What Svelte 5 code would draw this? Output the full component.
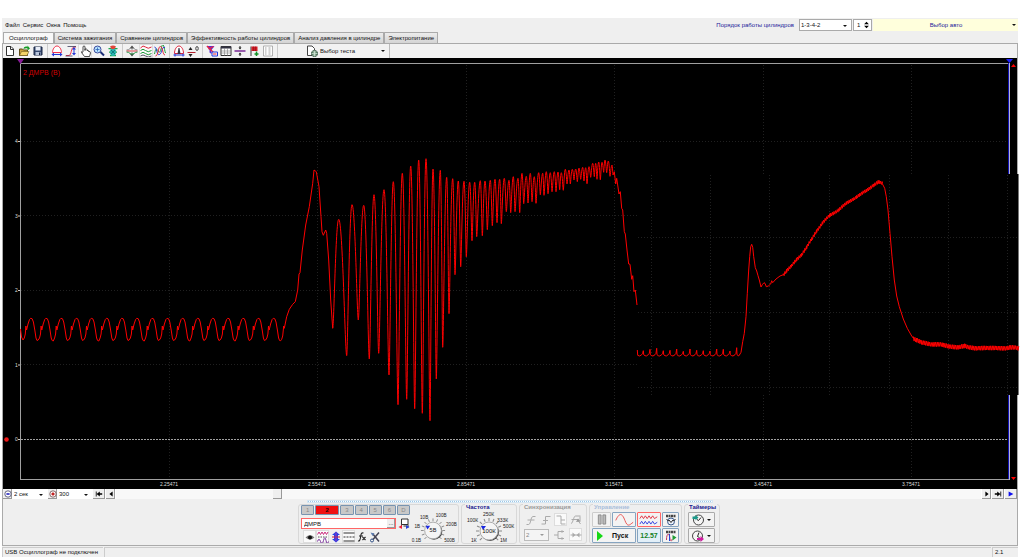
<script>
	const menus = ['Файл', 'Сервис', 'Окна', 'Помощь'];
	const tabs = [
		'Осциллограф',
		'Система зажигания',
		'Сравнение цилиндров',
		'Эффективность работы цилиндров',
		'Анализ давления в цилиндре',
		'Электропитание'
	];
	const toolGroups = [
		['new', 'open', 'save'],
		['dome', 'edge', 'hand', 'zoom', 'bug'],
		['expand', 'waves', 'overlap'],
		['measure', 'level'],
		['filter', 'table', 'divide', 'flag', 'report']
	];
	const pressed = ['hand', 'waves'];
	const channels = ['1', '2', '3', '4', '5', '6', 'D'];
	const channelTools = ['eye', 'noise', 'shift', 'lines', 'fx', 'cut'];
	const syncModes = ['rise', 'step', 'fall', 'auto'];

	let activeTab = $state(0);
	let activeChannel = $state('2');

	// 24x24 icons
	const icons = {
		new: '<path d="M5 3h9l5 5v13H5z" fill="#fff" stroke="#333" stroke-width="2"/><path d="M13 3v6h6" fill="none" stroke="#333" stroke-width="2"/>',
		open: '<path d="M3 21V8h6l2 2h8v11z" fill="#c9a13b" stroke="#5d4a16" stroke-width="2"/><path d="M3 21l4-8h15l-4 8z" fill="#f2d267" stroke="#5d4a16"/><path d="M11 8c1-5 5-6 8-4V1l5 6-5 4V7c-3-1-5 0-8 1z" fill="#159b25"/>',
		save: '<path d="M4 4h16v16H4z" fill="#35486f" stroke="#1b2744" stroke-width="2"/><path d="M7 4h10v7H7z" fill="#e9eef8"/><path d="M7 14h10v6H7z" fill="#b8c4da"/><path d="M14 15h2v5h-2z" fill="#1b2744"/>',
		dome: '<path d="M3 15c0-6 4-13 9-13s9 7 9 13z" fill="#fff" stroke="#f0304a" stroke-width="2"/><path d="M1 19l5-4v3h12v-3l5 4-5 4v-3H6v3z" fill="#2438d8"/>',
		edge: '<path d="M2 21h6c5 0 4-17 10-17h4" fill="none" stroke="#f0304a" stroke-width="2"/><path d="M5 3h17M1 22h14" stroke="#335" stroke-width="1.5"/><path d="M18 4l4 5h-3v7h3l-4 5-4-5h3V9h-3z" fill="#2438d8"/>',
		hand: '<path d="M8 14V4q0-2 2-2t2 2v7V8q4-1 4 1v2q4-1 3 2 4-1 4 3l-2 7H11l-6-8q-2-3 3 0" fill="#fff" stroke="#222" stroke-width="1.6"/>',
		zoom: '<circle cx="9" cy="9" r="7" fill="#b9e4ff" stroke="#3a4a9b" stroke-width="2"/><path d="M15 14l7 7" stroke="#1c2f78" stroke-width="4"/><path d="M5 9h8M9 5v8" stroke="#2f62b8" stroke-width="1.6"/>',
		bug: '<path d="M3 7h18M4 14h16M6 21h12" stroke="#19a54b" stroke-width="2.5"/><ellipse cx="12" cy="14" rx="6" ry="8" fill="#28b6b0"/><path d="M6 3q6-4 12 0l-3 5H9z" fill="#e0453a"/><path d="M8 10l8 8M16 10l-8 8" stroke="#0a6a70" stroke-width="1.5"/>',
		expand: '<path d="M12 1l4 5h-8zM12 23l4-5h-8z" fill="#444"/><path d="M12 4v5M12 15v5" stroke="#444" stroke-width="2"/><path d="M1 10q5 0 7-3 4-3 8 0 3 3 7 3" fill="none" stroke="#666" stroke-width="1.5"/><path d="M1 12h22" stroke="#d93a46" stroke-width="2"/><path d="M1 14q5 0 7 3 4 3 8 0 3-3 7-3" fill="none" stroke="#249342" stroke-width="2"/>',
		waves: '<path d="M1 6q5-7 10-2t12 0" fill="none" stroke="#e0243a" stroke-width="2"/><path d="M1 11q5-5 10 0t12 0" fill="none" stroke="#1d9b3a" stroke-width="2"/><path d="M1 17q5-5 10 0t12 0" fill="none" stroke="#1d9b3a" stroke-width="2"/><path d="M1 22q5-4 10 0t12 0" fill="none" stroke="#556" stroke-width="2"/>',
		overlap: '<path d="M1 18C6-8 9 28 14 8s6 0 9 8" fill="none" stroke="#1d9b3a" stroke-width="2"/><path d="M1 4c5 0 4 18 10 15S15 2 22 5" fill="none" stroke="#2438d8" stroke-width="2"/><path d="M3 22C9 22 8 2 13 3s4 17 9 17" fill="none" stroke="#e0243a" stroke-width="2"/>',
		measure: '<path d="M3 17c0-8 4-15 9-15s9 7 9 15z" fill="#fff" stroke="#e0243a" stroke-width="2"/><path d="M9 18l2-12h2l2 12z" fill="#334"/><path d="M1 20h22M4 17v6M20 17v6" stroke="#2438d8" stroke-width="2"/>',
		level: '<path d="M1 15h16" stroke="#b3202c" stroke-width="2"/><path d="M7 4l4 6H3zM7 24l4-6H3z" fill="#222"/><ellipse cx="20" cy="7" rx="2.500" ry="4" fill="none" stroke="#222" stroke-width="1.6"/>',
		filter: '<path d="M1 2h16l-6 8v8l-4-3v-5z" fill="#5a2bd1"/><path d="M2 2l13 13M15 3L5 8" stroke="#f0243a" stroke-width="2.5"/><path d="M12 14h11v8H12z" fill="#fff" stroke="#2438d8" stroke-width="2"/><path d="M14 18h7" stroke="#e0243a" stroke-width="2"/>',
		table: '<path d="M2 3h20v18H2z" fill="#fff" stroke="#333" stroke-width="2"/><path d="M2 5h20" stroke="#334" stroke-width="4"/><path d="M9 6v15M15 6v15M2 12h20M2 16h20" stroke="#888" stroke-width="1.3"/>',
		divide: '<path d="M1 12h22" stroke="#7a2a96" stroke-width="3"/><path d="M12 2v5M12 17v5" stroke="#222" stroke-width="2"/><path d="M9 5h6l-3 4zM9 19h6l-3-4z" fill="#222"/>',
		flag: '<path d="M6 3v19" stroke="#333" stroke-width="2"/><path d="M7 3h12v9H7z" fill="#d21923"/><path d="M11 3v9M15 3v9" stroke="#801018"/><path d="M17 13v9M13 18h8" stroke="#139427" stroke-width="3"/>',
		report: '<path d="M3 2h18v20H3z" fill="#fdfdfd" stroke="#999" stroke-width="1.5"/><path d="M6 6h3M13 6h4M6 10h3M13 10h4M6 14h3M13 14h4M6 18h3M13 18h4" stroke="#888" stroke-width="1.5"/>',
		test: '<path d="M3 2h9l5 5v14H3z" fill="#fff" stroke="#444" stroke-width="2"/><circle cx="17" cy="17" r="6" fill="#6f9a7c" stroke="#2b4c38" stroke-width="2"/><path d="M11 17h12M17 11v12M13 13q4 3 8 0M13 21q4-3 8 0" fill="none" stroke="#dfeee4" stroke-width="1.2"/>',
		eye: '<path d="M3 13q9-9 18 0-9 8-18 0z" fill="#777"/><circle cx="12" cy="13" r="4" fill="#111"/>',
		noise: '<path d="M1 7l3-5 3 5 3-5 3 5 3-5 3 5 3-5" fill="none" stroke="#cc2b7e" stroke-width="2"/><path d="M1 21q3-9 6 0t6-2 5 0 5 2" fill="none" stroke="#7a309c" stroke-width="2"/><path d="M2 12h20" stroke="#222" stroke-width="1.5" stroke-dasharray="3 2"/>',
		shift: '<path d="M12 1l8 7h-4v8h4l-8 7-8-7h4V8H4z" fill="#2742e8"/><path d="M4 12h16" stroke="#d0253b" stroke-width="2"/><path d="M12 3v18" stroke="#a030b0" stroke-width="2"/>',
		lines: '<path d="M1 4h22M1 20h22" stroke="#333" stroke-width="2"/><path d="M1 12h22" stroke="#333" stroke-width="2" stroke-dasharray="4 2"/>',
		fx: '<path d="M4 20q4 1 5-7l1-6q1-4 5-3M6 10h8M13 12l6 6M19 12l-6 6" fill="none" stroke="#222" stroke-width="2.2"/>',
		cut: '<path d="M7 5l13 16M20 3L8 17" stroke="#445" stroke-width="3"/><circle cx="6" cy="19" r="3" fill="none" stroke="#2f4f83" stroke-width="2"/><path d="M3 3l8 2-4 5z" fill="#5a7bb0"/>',
		probe: '<path d="M7 2h13v11H7z" fill="#fff" stroke="#333" stroke-width="2"/><path d="M7 13v6M20 13v6M11 16h6" stroke="#333" stroke-width="2"/><path d="M1 18l7-4v8z" fill="#f0253b"/><path d="M23 18l-7-4v8z" fill="#2742d8"/>',
		rise: '<path d="M3 21h4c5 0 4-16 9-16h5M5 12h14" fill="none" stroke="#aaa" stroke-width="2"/>',
		step: '<path d="M3 20h8V5h10M6 13h10" fill="none" stroke="#aaa" stroke-width="2"/>',
		fall: '<path d="M3 4h9v16h9M12 12h8" fill="none" stroke="#aaa" stroke-width="2"/>',
		auto: '<path d="M2 19c4 0 5-15 9-15h10M3 11h14M14 10l7 10M20 5v10" fill="none" stroke="#aaa" stroke-width="2"/><path d="M12 16l4-7 5 6z" fill="#999"/>',
		split: '<path d="M2 12h8M10 5v14M10 5h12M10 19h12" fill="none" stroke="#aaa" stroke-width="2"/><path d="M17 2l5 3-5 3zM17 16l5 3-5 3z" fill="#aaa"/>',
		meet: '<path d="M1 12h22" stroke="#aaa" stroke-width="2"/><path d="M5 7l6 5-6 5zM19 7l-6 5 6 5z" fill="#aaa"/>',
		gauge: '<path d="M2 4h20" stroke="#444" stroke-width="5" stroke-dasharray="4 1"/><circle cx="12" cy="15" r="7" fill="#eef3fb" stroke="#38598c" stroke-width="2"/><path d="M3 11l5 3M21 11l-5 3M8 12l4 5 4-5" fill="none" stroke="#222" stroke-width="2"/>',
		replay: '<path d="M2 4h20" stroke="#444" stroke-width="5" stroke-dasharray="4 1"/><path d="M3 20c0-15 6-15 7-2 1 5 4 5 4 0" fill="none" stroke="#c23a5c" stroke-width="2"/><path d="M15 10l8 5-8 6z" fill="#1f9c33"/><path d="M9 8v14" stroke="#2742d8" stroke-width="2"/>',
		clock: '<circle cx="13" cy="12" r="10" fill="#f6f6f6" stroke="#444" stroke-width="2"/><path d="M13 13l5-6M13 13l-3-2" stroke="#222" stroke-width="2"/><path d="M1 5h7v5H1z" fill="#1c9a8a"/><path d="M7 2l6 5-6 6z" fill="#1c9a8a"/>',
		stopclock: '<circle cx="11" cy="12" r="10" fill="#f6f6f6" stroke="#444" stroke-width="2"/><path d="M11 13l3-8M11 13l4 2" stroke="#222" stroke-width="2"/><path d="M10 16h7v-4l7 6-7 6v-4h-7z" fill="#d01ca0"/>'
	};

	const knobs = {
		volt: {
			value: '5В',
			labels: [
				['0.1В', 5, 39],
				['1В', 8, 24],
				['10В', 14, 15],
				['100В', 31, 13],
				['200В', 42, 22],
				['500В', 40, 39]
			]
		},
		freq: {
			value: '100К',
			labels: [
				['1К', 10, 38],
				['100К', 6, 18],
				['250К', 22, 12],
				['333К', 36, 18],
				['500К', 42, 24],
				['1М', 39, 38]
			]
		}
	};
	const ticks = Array.from({ length: 13 }, (_, i) => -135 + i * 22.5);

	// Plot geometry
	const gridX = [169, 317, 466, 614, 763, 911];
	const gridY = [141, 215, 290, 364];
	const insetX = [651, 710, 769, 829, 889, 948, 1007];
	const insetY = [237, 312, 387];
	const times = ['2.25471', '2.55471', '2.85471', '3.15471', '3.45471', '3.75471'];

	// Samples are stored in thirds of a plot unit, relative to the given origin
	const scale = (ox, oy, list) => {
		const out = [];
		for (let i = 0; i < list.length; i += 2) out.push([ox + list[i] / 3, oy + list[i + 1] / 3]);
		return out;
	};
	const line = (points) => points.map((p) => p[0].toFixed(1) + ' ' + p[1].toFixed(1)).join('L');

	const idle = [[20.5, 329], [21.5, 337]];
	for (let i = 0; i < 17; i++) {
		const x = 23 + i * 15.16;
		const dip = i % 3 === 2 ? 1 : 0;
		idle.push(
			[x, 340 + dip], [x + 1.3, 338], [x + 2.3, 334], [x + 2.9, 326], [x + 3.6, 330],
			[x + 5, 324], [x + 6.5, 319.5], [x + 7.7, 318.3], [x + 9.2, 318.8], [x + 10.4, 322],
			[x + 11.8, 330], [x + 13, 338], [x + 14, 340.5]
		);
	}

	const surge = scale(270, 140, [
		32, 602, 35, 598, 38, 588, 41, 558, 43, 565, 50, 530, 58, 508, 68, 493, 76, 485, 83, 450,
		87, 402, 90, 398, 97, 330, 107, 255, 118, 200, 128, 130, 132, 90, 139, 95, 147, 140,
		153, 230, 156, 275, 160, 286, 167, 270, 170, 280, 176, 360, 182, 480, 188, 565
	]);

	// Alternating peaks and troughs of the ringing part
	const ringing = [
		...scale(270, 140, [
			206, 238, 230, 647, 246, 194, 265, 540, 281, 196, 298, 657, 312, 164, 326, 640,
			342, 149, 357, 705, 370, 125, 384, 794, 397, 100, 410, 778, 422, 78, 434, 806,
			446, 60, 457, 820, 468, 56, 480, 842, 489, 87, 499, 717, 511, 91, 518, 622,
			530, 112, 537, 521, 548, 116, 555, 404, 565, 123, 572, 380, 582, 124, 589, 350
		]),
		...scale(440, 140, [
			89, 127, 96, 302, 104, 127, 110, 290, 121, 122, 127, 287, 135, 123, 142, 269,
			151, 121, 157, 257, 165, 118, 171, 248, 179, 118, 184, 251, 193, 115, 199, 215,
			207, 121, 212, 218, 220, 110, 225, 215, 234, 115, 239, 218, 246, 100, 251, 191,
			259, 109, 264, 189, 271, 100, 276, 185, 283, 110, 288, 190, 296, 98, 301, 164,
			308, 100, 312, 166, 319, 95, 324, 161, 331, 98, 336, 155, 343, 95, 348, 155,
			354, 96, 359, 149, 364, 98, 370, 151, 376, 88, 381, 132, 387, 90, 391, 132,
			397, 88, 402, 120, 407, 87, 412, 125, 417, 84, 422, 118, 428, 82, 432, 123,
			437, 83, 441, 131, 447, 80, 452, 112, 458, 70, 463, 110, 467, 70, 471, 118,
			476, 66, 481, 119, 486, 67, 491, 97, 495, 60, 500, 98, 505, 63, 510, 109,
			516, 75, 519, 105
		])
	];
	let ring = '';
	let prev = surge[surge.length - 1];
	ringing.forEach((p, i) => {
		const dx = p[0] - prev[0];
		const out = i % 2 ? 0.5 : 0.2;
		const into = i % 2 ? 0.2 : 0.5;
		ring += `C${(prev[0] + dx * out).toFixed(1)} ${prev[1].toFixed(1)} ${(p[0] - dx * into).toFixed(1)} ${p[1].toFixed(1)} ${p[0].toFixed(1)} ${p[1].toFixed(1)}`;
		prev = p;
	});

	const drop = scale(440, 140, [
		523, 95, 527, 132, 530, 115, 537, 162, 541, 155, 545, 205, 548, 210, 553, 275, 556, 282,
		561, 330, 566, 372, 570, 373, 575, 418, 578, 407, 582, 455, 586, 450, 591, 495
	]);
	const mainTrace = 'M' + line(idle) + 'L' + line(surge) + ring + 'L' + line(drop);

	const spikes = [572, 568, 565, 572, 571, 567, 574, 567, 571, 572, 573, 567, 568, 573, 563];
	const pips = [22, 570, 23, 586];
	spikes.forEach((y, i) => {
		const x = 40 + i * 20;
		pips.push(x - 11, 588, x - 5, 584, x - 2, 580, x, y, x + 1, 584, x + 5, 587);
	});

	const bump = scale(630, 160, [
		...pips,
		327, 587, 333, 577, 338, 545, 343, 520, 348, 470, 352, 400, 356, 330, 359, 290,
		362, 260, 365, 253, 368, 262, 371, 290, 376, 323, 380, 333, 384, 347, 388, 360,
		393, 381, 397, 374, 402, 368, 405, 370, 409, 380, 415, 378, 422, 372, 425, 362,
		428, 368, 438, 357, 450, 348, 460, 344
	]);
	const climb = scale(630, 160, [
		460, 344, 470, 332, 485, 318, 500, 298, 515, 283, 530, 262, 545, 238, 560, 212,
		578, 188, 600, 166, 625, 150, 650, 130, 680, 110, 710, 92, 730, 75, 745, 66, 757, 71
	]);
	const fall = scale(630, 160, [
		757, 71, 764, 85, 769, 110, 774, 150, 780, 220, 786, 290, 793, 360, 800, 408,
		808, 440, 820, 477, 832, 505, 845, 528, 850, 534
	]);
	const tail = scale(630, 160, [
		850, 534, 860, 540, 875, 549, 910, 552, 940, 556, 960, 558, 985, 564, 1005, 557,
		1040, 567, 1070, 562, 1100, 566, 1140, 562, 1167, 566
	]);

	// Sensor noise on top of a smooth run of points
	function noisy(points, amp) {
		const out = [];
		let n = 0;
		for (let i = 1; i < points.length; i++) {
			const [x0, y0] = points[i - 1];
			const [x1, y1] = points[i];
			for (let x = x0; x < x1; x += 0.8) {
				const jitter = (n % 2 ? 1 : -1) * amp * (0.5 + 0.5 * Math.abs(Math.sin(n * 1.7)));
				out.push([x, y0 + ((y1 - y0) * (x - x0)) / (x1 - x0) + jitter]);
				n++;
			}
		}
		return out;
	}
	const insetTrace =
		'M' + line([...bump, ...noisy(climb, 2), ...fall, ...noisy(tail, 2.6)]);
</script>

{#snippet icon(name)}
	<svg class="icon" viewBox="0 0 24 24" aria-hidden="true">{@html icons[name]}</svg>
{/snippet}

{#snippet knob(k)}
	<svg class="knob" viewBox="0 0 56 40" role="img" aria-label={k.value}>
		{#each ticks as a}
			<line x1="28" y1="14" x2="28" y2="17" transform="rotate({a} 28 27)" stroke="#888" />
		{/each}
		<circle cx="29" cy="28" r="9" fill="#444" />
		<circle cx="28" cy="27" r="9" fill="#f5f5f5" stroke="#aaa" />
		<path d="M20 22h5l-3 4z" fill="#1a28e0" />
		<text x="28" y="29" text-anchor="middle" font-size="6" fill="#111">{k.value}</text>
		{#each k.labels as [text, x, y]}
			<text {x} {y} font-size="5" fill="#222">{text}</text>
		{/each}
	</svg>
{/snippet}

<main>
	<header>
		<nav class="menu">
			{#each menus as item}
				<button>{item}</button>
			{/each}
		</nav>
		<label class="order-label" for="order">Порядок работы цилиндров</label>
		<span class="drop order">
			<select id="order"><option>1-3-4-2</option></select>
		</span>
		<span class="spin">
			<input type="number" value="1" aria-label="Цилиндр" />
			<svg viewBox="0 0 6 10" aria-hidden="true">
				<path d="M0 4l3-3 3 3zM0 6l3 3 3-3z" />
			</svg>
		</span>
		<span class="drop car">
			<select aria-label="Авто"><option>Выбор авто</option></select>
		</span>
	</header>

	<div class="tabs" role="tablist">
		{#each tabs as tab, i}
			<button role="tab" aria-selected={activeTab === i} class:active={activeTab === i} onclick={() => (activeTab = i)}>
				{tab}
			</button>
		{/each}
	</div>

	<div class="frame">
		<div class="toolbar">
			{#each toolGroups as group}
				<div class="tools">
					{#each group as name}
						<button class:pressed={pressed.includes(name)} aria-label={name}>{@render icon(name)}</button>
					{/each}
				</div>
			{/each}
			<button class="test">{@render icon('test')}<span>Выбор теста</span><i class="arrow"></i></button>
		</div>

		<svg class="plot" viewBox="3 58 1014 431" role="img" aria-label="2 ДМРВ (В)">
			<rect x="3" y="58" width="1014" height="431" fill="#000" />
			<g stroke="#202020" stroke-dasharray="1 2">
				{#each gridX as x}
					<path d="M{x + 0.5} 65V479" />
				{/each}
				{#each gridY as y}
					<path d="M21 {y + 0.5}H1008" />
				{/each}
			</g>
			<path d="M21 439.5H1008" stroke="#a0a0a0" stroke-dasharray="2 1" />
			<path d="M20.5 479.5V63.5H1009" fill="none" stroke="#a0a0a0" />
			<path d="M20 479.5H1009" stroke="#a0a0a0" />
			<path d="M1008.5 63V479" stroke="#1414b8" />
			<path d="M1009.5 63V480" stroke="#b4b4d0" />
			<path d="M17 59h7l-3.500 5z" fill="#8a1c9a" />
			<path d="M1006 59h7l-3.500 4z" fill="#2020ff" />
			<path d="M1011 67h5l-2.500-3zM1011 477h5l-2.500 3z" fill="#f00" />
			<circle cx="6.500" cy="439.500" r="2.300" fill="#f01818" />

			<g fill="#ddd" font-size="5">
				{#each ['4', '3', '2', '1', '0'] as v, i}
					<text x="15" y={143 + i * 74.5}>{v}</text>
					<path d="M18 {141.5 + i * 74.5}h2" stroke="#ccc" />
				{/each}
				{#each times as t, i}
					<text x={gridX[i]} y="486" text-anchor="middle">{t}</text>
				{/each}
			</g>
			<text x="23" y="75" font-size="7" fill="#d00000">2 ДМРВ (В)</text>

			<rect x="638" y="174" width="381" height="221" fill="#000" />
			<g stroke="#202020" stroke-dasharray="1 2">
				{#each insetX as x}
					<path d="M{x + 0.5} 175V395" />
				{/each}
				{#each insetY as y}
					<path d="M638 {y + 0.5}H1018" />
				{/each}
			</g>
			<path d="M1018.5 174V395" stroke="#777" />
			<g fill="none" stroke="#f00" stroke-linejoin="round">
				<path d={mainTrace} />
				<path d={insetTrace} />
			</g>
		</svg>

		<div class="timeline">
			<button aria-label="Сжать"><svg viewBox="0 0 10 10"><circle cx="5" cy="5" r="4" fill="#fff" stroke="#446" /><path d="M3 5h4" stroke="#2222c0" stroke-width="2" /></svg></button>
			<span class="drop"><select aria-label="Развёртка"><option>2 сек</option></select></span>
			<button aria-label="Растянуть"><svg viewBox="0 0 10 10"><circle cx="5" cy="5" r="4" fill="#fff" stroke="#644" /><path d="M3 5h4M5 3v4" stroke="#c01818" stroke-width="2" /></svg></button>
			<span class="drop"><select aria-label="Масштаб"><option>300</option></select></span>
			<button class="wide" aria-label="В начало"><svg viewBox="0 0 10 10"><path d="M1 2h1v6H1zM6 2v6L2 5zM6 4h3v2H6z" /></svg></button>
			<button aria-label="Назад"><svg viewBox="0 0 10 10"><path d="M7 2v6L3 5z" /></svg></button>
			<input type="range" min="0" max="1000" value="183" aria-label="Позиция" />
			<button aria-label="Вперёд"><svg viewBox="0 0 10 10"><path d="M3 2v6l4-3z" /></svg></button>
			<button class="wide" aria-label="В конец"><svg viewBox="0 0 10 10"><path d="M8 2h1v6H8zM4 2v6l4-3zM1 4h3v2H1z" /></svg></button>
			<button class="wide" aria-label="Воспроизвести"><svg viewBox="0 0 10 10"><path d="M2 2v6l6-3z" fill="#1010f0" /></svg></button>
		</div>

		<div class="panel">
			<div class="grip"></div>
			<div class="groups">
				<div class="group channel">
					<div class="setup">
						<div class="channels">
							{#each channels as c}
								<button class:on={activeChannel === c} onclick={() => (activeChannel = c)}>{c}</button>
							{/each}
						</div>
						<div class="sensor">
							<span class="field">
								<input value="ДМРВ" aria-label="Датчик" />
								<button aria-label="Выбрать датчик">...</button>
							</span>
							<button class="flat" aria-label="probe">{@render icon('probe')}</button>
						</div>
						<div class="options">
							{#each channelTools as name, i}
								<button class="flat" class:pressed={i < 2 || i === 3} aria-label={name}>{@render icon(name)}</button>
							{/each}
						</div>
					</div>
					{@render knob(knobs.volt)}
				</div>

				<fieldset class="group">
					<legend>Частота</legend>
					{@render knob(knobs.freq)}
				</fieldset>

				<fieldset class="group sync" disabled>
					<legend>Синхронизация</legend>
					<div class="row">
						{#each syncModes as name}
							<button class="flat" class:pressed={name === 'fall'} aria-label={name}>{@render icon(name)}</button>
						{/each}
					</div>
					<div class="row">
						<span class="drop"><select aria-label="Канал"><option>2</option></select></span>
						<button class="flat" aria-label="split">{@render icon('split')}</button>
						<button class="flat pressed" aria-label="meet">{@render icon('meet')}</button>
					</div>
				</fieldset>

				<fieldset class="group control">
					<legend>Управление</legend>
					<div class="pad">
						<button class="pause" aria-label="Пауза"><svg class="wave" viewBox="0 0 24 14"><path d="M8 2h3v10H8zM13 2h3v10h-3z" fill="#bbb" stroke="#888" /></svg></button>
						<button aria-label="Синус"><svg class="wave" viewBox="0 0 24 14"><path d="M3 8C7-1 10 0 13 8s5 5 9 2" fill="none" stroke="#e84a4a" /></svg></button>
						<button class="red" aria-label="Сигналы">
							<svg class="wave" viewBox="0 0 24 14"><path d="M2 6l2-3 2 3 2-3 2 3 2-3 2 3 2-3 2 3 3-2" fill="none" stroke="#e02a3a" /><path d="M2 12l2-3 2 3 2-3 2 3 2-3 2 3 2-3 2 3 3-2" fill="none" stroke="#2a3ae0" /></svg>
						</button>
						<button aria-label="gauge">{@render icon('gauge')}</button>
						<button class="start"><svg class="play" viewBox="0 0 6 10"><path d="M0 0v10l6-5z" fill="#16d816" /></svg><span>Пуск</span></button>
						<output>12.57</output>
						<button aria-label="replay">{@render icon('replay')}</button>
					</div>
				</fieldset>

				<fieldset class="group timers">
					<legend>Таймеры</legend>
					<button aria-label="clock">{@render icon('clock')}<i class="arrow"></i></button>
					<button aria-label="stopclock">{@render icon('stopclock')}<i class="arrow"></i></button>
				</fieldset>
			</div>
		</div>
	</div>

	<footer>
		<span class="device">USB Осциллограф не подключен</span>
		<span class="fill"></span>
		<span class="version">2.1</span>
	</footer>
</main>

<style>
	:global(body) {
		margin: 0;
		background: #fff;
	}

	main {
		margin: 18px 6px 0 2px;
		background: #efefef;
		color: #111;
		font: 6px/8px 'Liberation Sans', Arial, sans-serif;
	}

	button,
	select,
	input,
	output {
		box-sizing: border-box;
		margin: 0;
		padding: 0;
		font: inherit;
		color: inherit;
		border: 0;
		border-radius: 0;
		background: none;
	}

	.icon {
		display: block;
		flex: none;
		width: 12px;
		height: 12px;
	}

	.arrow,
	.drop::after {
		content: '';
		border: 2px solid transparent;
		border-top-color: #111;
		border-bottom-width: 0;
	}

	.drop {
		position: relative;
		display: inline-flex;
		background: #fff;
	}

	.drop::after {
		position: absolute;
		right: 4px;
		top: 45%;
		pointer-events: none;
	}

	.drop select {
		appearance: none;
		width: 100%;
		padding-left: 1px;
		outline: none;
	}

	header {
		display: flex;
		align-items: center;
		height: 14px;
	}

	.menu {
		display: flex;
		flex: 1;
		gap: 3px;
		padding-left: 3px;
	}

	.order-label {
		color: #22229a;
		margin-right: 5px;
	}

	.order {
		width: 53px;
		height: 12px;
		box-sizing: border-box;
		border: 1px solid #aaa;
	}

	.spin {
		display: flex;
		align-items: center;
		box-sizing: border-box;
		width: 19px;
		height: 12px;
		margin: 0 1px;
		border: 1px solid #aaa;
		background: #fff;
	}

	.spin input {
		width: 10px;
		padding-left: 3px;
		appearance: textfield;
	}

	.spin input::-webkit-inner-spin-button {
		display: none;
	}

	.spin svg {
		width: 5px;
		height: 8px;
	}

	.car {
		width: 145px;
		height: 12px;
		background: #ffffdc;
		color: #22229a;
	}

	.car select {
		text-align: center;
		text-align-last: center;
	}

	.car::after {
		right: 2px;
	}

	.tabs {
		display: flex;
		height: 11px;
		padding-left: 1px;
	}

	.tabs button {
		padding: 0 3px;
		border: 1px solid #aaa;
		border-bottom: 0;
		border-radius: 1px 1px 0 0;
		background: linear-gradient(#ececec, #d4d4d4);
	}

	.tabs .active {
		padding: 0 5px;
		background: #f8f8f8;
	}

	.frame {
		border: 1px solid #aaa;
	}

	.toolbar {
		display: flex;
		height: 14px;
		background: #f2f2f2;
	}

	.tools {
		display: flex;
		padding-right: 2px;
		margin-right: 2px;
		border-right: 1px solid #ccc;
	}

	.tools button {
		display: flex;
		align-items: center;
		justify-content: center;
		width: 14px;
	}

	.tools .pressed,
	.flat.pressed {
		background: #fafafa;
		box-shadow: inset 0 0 0 1px #ddd;
	}

	.test {
		display: flex;
		align-items: center;
		gap: 2px;
		width: 84px;
		margin-left: 26px;
		padding-right: 4px;
		border-right: 1px solid #bbb;
	}

	.test span {
		flex: 1;
		text-align: left;
	}

	.plot {
		position: relative;
		display: block;
		width: 100%;
		overflow: visible;
	}

	.timeline {
		display: flex;
		gap: 1px;
		height: 10px;
		background: #fff;
	}

	.timeline .drop {
		width: 34px;
	}

	.timeline button {
		display: flex;
		align-items: center;
		justify-content: center;
		width: 9px;
		background: #efefef;
		box-shadow: inset -1px -1px #999;
	}

	.timeline .wide {
		width: 12px;
	}

	.timeline svg {
		width: 8px;
		height: 8px;
	}

	.timeline input {
		flex: 1;
		min-width: 0;
		appearance: none;
		background: #f8f8f8;
	}

	.timeline input::-webkit-slider-thumb {
		appearance: none;
		width: 9px;
		height: 10px;
		background: #efefef;
		box-shadow: inset -1px -1px #999;
	}

	.panel {
		display: flex;
		flex-direction: column;
		align-items: center;
		padding-bottom: 1px;
	}

	.grip {
		width: 404px;
		height: 1px;
		margin: 1px 0;
		border: 1px solid #d6e6f2;
		background: repeating-linear-gradient(90deg, #9cc8e8 0 1px, #fff 1px 2px);
	}

	.groups {
		display: flex;
		align-items: flex-end;
		gap: 2px;
		padding-right: 2px;
	}

	.group {
		box-sizing: border-box;
		height: 40px;
		margin: 0;
		padding: 0 2px;
		min-width: 0;
		border: 1px solid #d8d8d8;
		border-radius: 3px;
	}

	fieldset.group {
		position: relative;
	}

	legend {
		position: absolute;
		top: -1px;
		left: 3px;
		padding: 0 1px;
		background: #efefef;
		font-weight: bold;
		line-height: 7px;
		color: #1a1a90;
	}

	.sync legend {
		color: #999;
	}

	.control legend {
		color: #a8bedb;
	}

	.knob {
		display: block;
		width: 56px;
		height: 40px;
		margin: -1px -3px;
	}

	.channel {
		display: flex;
		width: 161px;
	}

	.setup {
		width: 111px;
	}

	.channels {
		display: flex;
		gap: 1px;
	}

	.channels button {
		flex: 1;
		height: 10px;
		border: 1px solid #7894b0;
		border-radius: 1px;
		background: #c8c8c8;
		color: #888;
	}

	.channels .on {
		flex: 2;
		background: #f01010;
		color: #200;
		font-weight: bold;
	}

	.sensor {
		display: flex;
		align-items: center;
		gap: 1px;
		margin-top: 2px;
	}

	.field {
		display: flex;
		box-sizing: border-box;
		width: 95px;
		height: 11px;
		border: 1px solid #f66;
		background: #fff;
	}

	.field input {
		flex: 1;
		min-width: 0;
		padding-left: 2px;
	}

	.field button {
		width: 8px;
		background: #efefef;
		box-shadow: inset -1px -1px #999;
		line-height: 5px;
	}

	.flat {
		display: flex;
		align-items: center;
		justify-content: center;
		width: 13px;
		height: 13px;
	}

	.options {
		display: flex;
		padding-left: 2px;
	}

	.sync {
		width: 68px;
	}

	.row {
		display: flex;
		align-items: center;
		justify-content: space-between;
		margin-top: 2px;
		padding: 0 2px;
	}

	.sync .row:first-of-type {
		margin-top: 8px;
	}

	.sync .drop {
		width: 25px;
		height: 12px;
		box-sizing: border-box;
		border: 1px solid #bbb;
		background: #f4f4f4;
		color: #555;
	}

	.sync .drop::after {
		border-top-color: #999;
	}

	.pad {
		display: grid;
		grid-template-columns: 19px 24px 24px 17px;
		grid-auto-rows: 15px;
		gap: 1px;
		margin-top: 7px;
	}

	.pad button,
	.pad output,
	.timers button {
		display: flex;
		align-items: center;
		justify-content: center;
		border: 1px solid #86a4c0;
		border-radius: 1px;
		background: #f3f3f3;
	}

	.wave {
		flex: none;
		width: 22px;
		height: 13px;
	}

	.pad .pause {
		border-color: #ccc;
	}

	.pad .red {
		border: 1px solid #f66;
	}

	.pad .start {
		grid-column: span 2;
		justify-content: flex-start;
		gap: 9px;
		padding-left: 4px;
		font-weight: bold;
		font-size: 7px;
	}

	.play {
		width: 6px;
		height: 10px;
	}

	.pad output {
		background: #e2eff8;
		color: #14801c;
		font-weight: bold;
		font-size: 7px;
	}

	.timers {
		width: 36px;
	}

	.timers button {
		gap: 3px;
		width: 27px;
		height: 15px;
		margin: 7px 0 0 1px;
		border-color: #aaa;
	}

	.timers button + button {
		margin-top: 1px;
	}

	footer {
		display: flex;
		gap: 1px;
		height: 10px;
		padding-top: 1px;
	}

	footer span {
		box-sizing: border-box;
		padding-left: 2px;
		border-top: 1px solid #ccc;
		border-left: 1px solid #ccc;
	}

	.device {
		width: 101px;
	}

	.fill {
		flex: 1;
	}

	.version {
		width: 26px;
	}
</style>
